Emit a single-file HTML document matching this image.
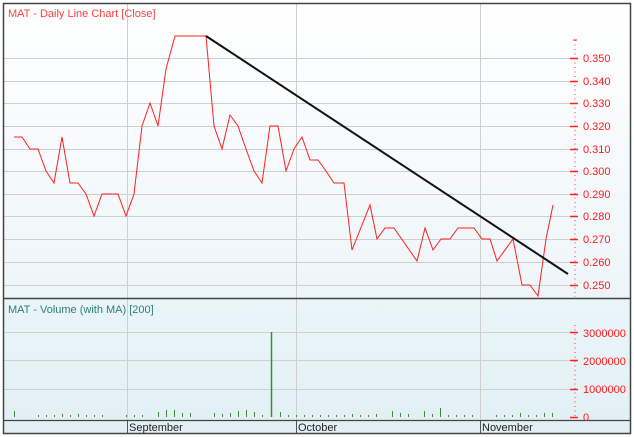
<!DOCTYPE html>
<html><head><meta charset="utf-8"><style>
body{margin:0;background:#fff;}
svg{display:block;font-family:"Liberation Sans",sans-serif;}
</style></head><body>
<svg width="634" height="437" viewBox="0 0 634 437" xmlns="http://www.w3.org/2000/svg">
<defs>
<linearGradient id="g1" x1="0" y1="0" x2="0" y2="1"><stop offset="0" stop-color="#ffffff"/><stop offset="1" stop-color="#eef5f9"/></linearGradient>
<linearGradient id="g2" x1="0" y1="0" x2="0" y2="1"><stop offset="0" stop-color="#eaf5f8"/><stop offset="1" stop-color="#e2f0f5"/></linearGradient>
</defs>
<rect x="0" y="0" width="634" height="437" fill="#fff"/>
<rect x="3" y="3" width="628" height="295" fill="url(#g1)"/>
<rect x="3" y="298" width="628" height="123" fill="url(#g2)"/>
<rect x="3" y="421" width="628" height="13" fill="#e2f0f5"/>
<g stroke="#cfcfcf" stroke-width="1">
<line x1="4" y1="58.5" x2="575" y2="58.5"/><line x1="4" y1="81.5" x2="575" y2="81.5"/><line x1="4" y1="103.5" x2="575" y2="103.5"/><line x1="4" y1="126.5" x2="575" y2="126.5"/><line x1="4" y1="149.5" x2="575" y2="149.5"/><line x1="4" y1="171.5" x2="575" y2="171.5"/><line x1="4" y1="194.5" x2="575" y2="194.5"/><line x1="4" y1="216.5" x2="575" y2="216.5"/><line x1="4" y1="239.5" x2="575" y2="239.5"/><line x1="4" y1="262.5" x2="575" y2="262.5"/><line x1="4" y1="285.5" x2="575" y2="285.5"/>
<line x1="4" y1="332.5" x2="575" y2="332.5"/><line x1="4" y1="360.5" x2="575" y2="360.5"/><line x1="4" y1="389.5" x2="575" y2="389.5"/>
<line x1="127.5" y1="4" x2="127.5" y2="420"/><line x1="296.5" y1="4" x2="296.5" y2="420"/><line x1="480.5" y1="4" x2="480.5" y2="420"/>
</g>
<g stroke="#555" stroke-width="1">
<line x1="127.5" y1="421" x2="127.5" y2="434"/><line x1="296.5" y1="421" x2="296.5" y2="434"/><line x1="480.5" y1="421" x2="480.5" y2="434"/>
</g>
<rect x="3.5" y="3.5" width="627" height="430" fill="none" stroke="#444" stroke-width="1.5"/>
<line x1="3" y1="298.5" x2="631" y2="298.5" stroke="#444" stroke-width="1.5"/>
<line x1="3" y1="420.5" x2="631" y2="420.5" stroke="#444" stroke-width="1.2"/>
<text x="8" y="17" font-size="11" fill="#ff4040">MAT - Daily Line Chart [Close]</text>
<text x="8" y="313" font-size="11" fill="#2f7f70">MAT - Volume (with MA) [200]</text>
<polyline fill="none" stroke="#ff2020" stroke-width="1" points="14,137 22,137 30,149 38,149 46,171 54,183 62,137 70,183 78,183 86,194 94,216 102,194 110,194 118,194 126,216 134,194 142,126 150,103 158,126 166,69 175,36 206,36 214,126 222,149 230,115 238,126 246,149 254,171 262,183 270,126 278,126 286,171 294,149 302,137 310,160 318,160 326,171 334,183 344,183 352,250 370,205 377,239 385,228 394,228 417,261 425,228 433,250 441,239 450,239 458,228 474,228 482,239 490,239 497,261 513,239 522,285 530,285 538,296 546,239 553,205"/>
<line x1="206" y1="36" x2="568" y2="274" stroke="#111" stroke-width="2"/>
<g stroke="#ff3030" stroke-width="1">
<line x1="573" y1="40" x2="577" y2="40"/>
</g>
<g stroke="#ff3030" stroke-width="1" stroke-dasharray="1,3.5">
<line x1="575" y1="40" x2="575" y2="297"/><line x1="575" y1="325" x2="575" y2="418"/>
</g>
<g stroke="#ff2020" stroke-width="1.5">
<line x1="570" y1="58.5" x2="578" y2="58.5"/><line x1="570" y1="81.5" x2="578" y2="81.5"/><line x1="570" y1="103.5" x2="578" y2="103.5"/><line x1="570" y1="126.5" x2="578" y2="126.5"/><line x1="570" y1="149.5" x2="578" y2="149.5"/><line x1="570" y1="171.5" x2="578" y2="171.5"/><line x1="570" y1="194.5" x2="578" y2="194.5"/><line x1="570" y1="216.5" x2="578" y2="216.5"/><line x1="570" y1="239.5" x2="578" y2="239.5"/><line x1="570" y1="262.5" x2="578" y2="262.5"/><line x1="570" y1="285.5" x2="578" y2="285.5"/>
<line x1="570" y1="332.5" x2="578" y2="332.5"/><line x1="570" y1="360.5" x2="578" y2="360.5"/><line x1="570" y1="389.5" x2="578" y2="389.5"/><line x1="570" y1="417.5" x2="578" y2="417.5"/>
</g>
<g font-size="11" fill="#ff1a1a">
<text x="583" y="62">0.350</text><text x="583" y="85">0.340</text><text x="583" y="107">0.330</text><text x="583" y="130">0.320</text><text x="583" y="153">0.310</text><text x="583" y="175">0.300</text><text x="583" y="198">0.290</text><text x="583" y="220">0.280</text><text x="583" y="243">0.270</text><text x="583" y="266">0.260</text><text x="583" y="289">0.250</text>
<text x="583" y="337">3000000</text><text x="583" y="365">2000000</text><text x="583" y="393">1000000</text><text x="583" y="421">0</text>
</g>
<g stroke="#3a8a3a" stroke-width="1">
<line x1="14.5" y1="417" x2="14.5" y2="411"/><line x1="38.5" y1="417" x2="38.5" y2="415"/><line x1="46.5" y1="417" x2="46.5" y2="415"/><line x1="54.5" y1="417" x2="54.5" y2="415"/><line x1="62.5" y1="417" x2="62.5" y2="414"/><line x1="70.5" y1="417" x2="70.5" y2="415"/><line x1="78.5" y1="417" x2="78.5" y2="414"/><line x1="86.5" y1="417" x2="86.5" y2="415"/><line x1="94.5" y1="417" x2="94.5" y2="415"/><line x1="102.5" y1="417" x2="102.5" y2="415"/>
<line x1="126.5" y1="417" x2="126.5" y2="415"/><line x1="134.5" y1="417" x2="134.5" y2="415"/><line x1="142.5" y1="417" x2="142.5" y2="415"/><line x1="158.5" y1="417" x2="158.5" y2="412"/><line x1="166.5" y1="417" x2="166.5" y2="410"/><line x1="174.5" y1="417" x2="174.5" y2="410"/><line x1="182.5" y1="417" x2="182.5" y2="413"/><line x1="190.5" y1="417" x2="190.5" y2="413"/>
<line x1="214.5" y1="417" x2="214.5" y2="413"/><line x1="222.5" y1="417" x2="222.5" y2="414"/><line x1="230.5" y1="417" x2="230.5" y2="413"/><line x1="238.5" y1="417" x2="238.5" y2="411"/><line x1="246.5" y1="417" x2="246.5" y2="410"/><line x1="254.5" y1="417" x2="254.5" y2="412"/><line x1="262.5" y1="417" x2="262.5" y2="415"/><line x1="271.5" y1="417" x2="271.5" y2="332" stroke-width="1.5"/><line x1="280.5" y1="417" x2="280.5" y2="412"/><line x1="288.5" y1="417" x2="288.5" y2="415"/>
<line x1="296.5" y1="417" x2="296.5" y2="415"/><line x1="304.5" y1="417" x2="304.5" y2="415"/><line x1="312.5" y1="417" x2="312.5" y2="415"/><line x1="320.5" y1="417" x2="320.5" y2="415"/><line x1="328.5" y1="417" x2="328.5" y2="415"/><line x1="336.5" y1="417" x2="336.5" y2="415"/><line x1="344.5" y1="417" x2="344.5" y2="415"/><line x1="352.5" y1="417" x2="352.5" y2="414"/><line x1="360.5" y1="417" x2="360.5" y2="415"/><line x1="368.5" y1="417" x2="368.5" y2="415"/><line x1="376.5" y1="417" x2="376.5" y2="414"/><line x1="392.5" y1="417" x2="392.5" y2="411"/><line x1="400.5" y1="417" x2="400.5" y2="413"/><line x1="408.5" y1="417" x2="408.5" y2="414"/><line x1="424.5" y1="417" x2="424.5" y2="411"/><line x1="432.5" y1="417" x2="432.5" y2="414"/><line x1="440.5" y1="417" x2="440.5" y2="408"/><line x1="448.5" y1="417" x2="448.5" y2="415"/><line x1="456.5" y1="417" x2="456.5" y2="415"/><line x1="464.5" y1="417" x2="464.5" y2="415"/><line x1="472.5" y1="417" x2="472.5" y2="415"/>
<line x1="496.5" y1="417" x2="496.5" y2="415"/><line x1="504.5" y1="417" x2="504.5" y2="415"/><line x1="512.5" y1="417" x2="512.5" y2="415"/><line x1="520.5" y1="417" x2="520.5" y2="413"/><line x1="528.5" y1="417" x2="528.5" y2="415"/><line x1="536.5" y1="417" x2="536.5" y2="415"/><line x1="544.5" y1="417" x2="544.5" y2="413"/><line x1="552.5" y1="417" x2="552.5" y2="413"/>
</g>
<g font-size="11" fill="#222">
<text x="129" y="431">September</text><text x="298" y="431">October</text><text x="482" y="431">November</text>
</g>
</svg>
</body></html>
